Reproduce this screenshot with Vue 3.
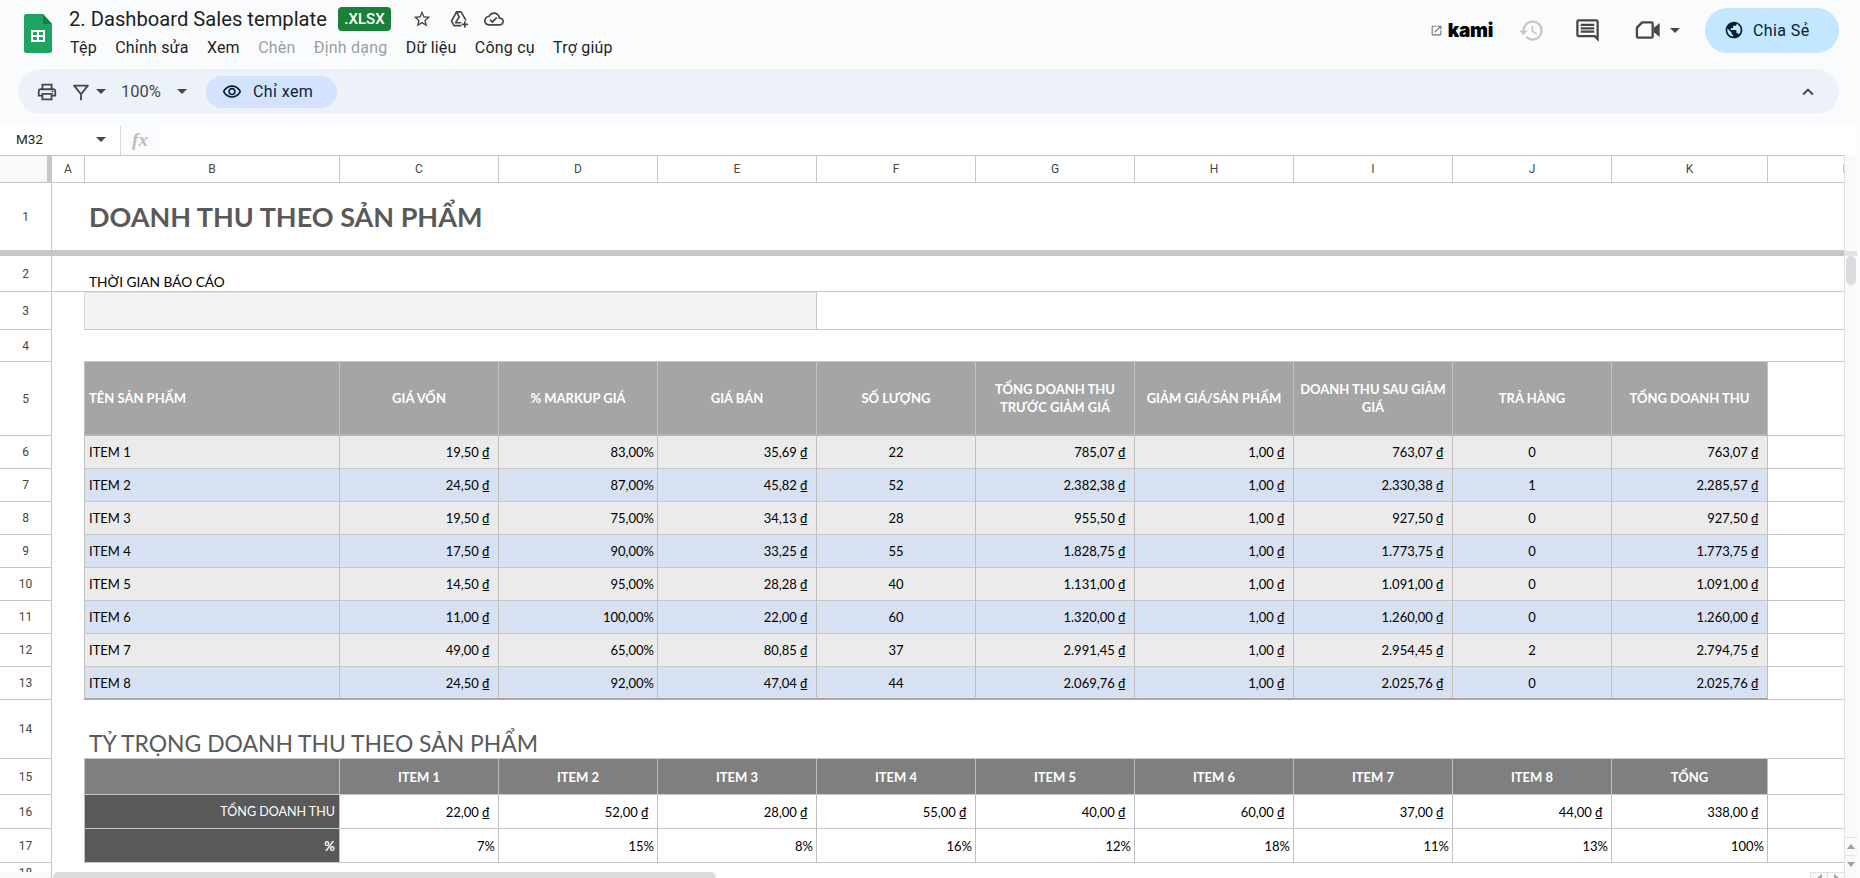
<script setup>
const menu = [
  { label: 'Tệp' },
  { label: 'Chỉnh sửa' },
  { label: 'Xem' },
  { label: 'Chèn', off: true },
  { label: 'Định dạng', off: true },
  { label: 'Dữ liệu' },
  { label: 'Công cụ' },
  { label: 'Trợ giúp' }
]

const letters = ['A', 'B', 'C', 'D', 'E', 'F', 'G', 'H', 'I', 'J', 'K', 'L']

const heads = [
  'TÊN SẢN PHẨM', 'GIÁ VỐN', '% MARKUP GIÁ', 'GIÁ BÁN', 'SỐ LƯỢNG',
  'TỔNG DOANH THU TRƯỚC GIẢM GIÁ', 'GIẢM GIÁ/SẢN PHẨM', 'DOANH THU SAU GIẢM GIÁ', 'TRẢ HÀNG', 'TỔNG DOANH THU'
]

const products = [
  ['ITEM 1', '19,50 ₫', '83,00%', '35,69 ₫', '22', '785,07 ₫', '1,00 ₫', '763,07 ₫', '0', '763,07 ₫'],
  ['ITEM 2', '24,50 ₫', '87,00%', '45,82 ₫', '52', '2.382,38 ₫', '1,00 ₫', '2.330,38 ₫', '1', '2.285,57 ₫'],
  ['ITEM 3', '19,50 ₫', '75,00%', '34,13 ₫', '28', '955,50 ₫', '1,00 ₫', '927,50 ₫', '0', '927,50 ₫'],
  ['ITEM 4', '17,50 ₫', '90,00%', '33,25 ₫', '55', '1.828,75 ₫', '1,00 ₫', '1.773,75 ₫', '0', '1.773,75 ₫'],
  ['ITEM 5', '14,50 ₫', '95,00%', '28,28 ₫', '40', '1.131,00 ₫', '1,00 ₫', '1.091,00 ₫', '0', '1.091,00 ₫'],
  ['ITEM 6', '11,00 ₫', '100,00%', '22,00 ₫', '60', '1.320,00 ₫', '1,00 ₫', '1.260,00 ₫', '0', '1.260,00 ₫'],
  ['ITEM 7', '49,00 ₫', '65,00%', '80,85 ₫', '37', '2.991,45 ₫', '1,00 ₫', '2.954,45 ₫', '2', '2.794,75 ₫'],
  ['ITEM 8', '24,50 ₫', '92,00%', '47,04 ₫', '44', '2.069,76 ₫', '1,00 ₫', '2.025,76 ₫', '0', '2.025,76 ₫']
]

const cellClass = (i) => {
  if (i === 0) return 'left first'
  if (i === 2) return 'pct'
  if (i === 4 || i === 8) return 'mid'
  return 'money'
}

const shareHeads = ['ITEM 1', 'ITEM 2', 'ITEM 3', 'ITEM 4', 'ITEM 5', 'ITEM 6', 'ITEM 7', 'ITEM 8', 'TỔNG']
const shareTotals = ['22,00 ₫', '52,00 ₫', '28,00 ₫', '55,00 ₫', '40,00 ₫', '60,00 ₫', '37,00 ₫', '44,00 ₫', '338,00 ₫']
const sharePct = ['7%', '15%', '8%', '16%', '12%', '18%', '11%', '13%', '100%']
</script>

<template>
  <div class="page">
    <header class="topbar">
      <svg class="logo" viewBox="0 0 28 39" width="28" height="39">
        <path fill="#1ea362" d="M2.5 0H19l9 10v26.5a2.5 2.5 0 0 1-2.5 2.5h-23A2.5 2.5 0 0 1 0 36.500V2.500A2.500 2.500 0 0 1 2.500 0z" />
        <path fill="#12804a" d="M19 0l9 10h-9z" />
        <path fill="#fff" d="M7 16h14v12H7zm2 2v3h4v-3zm6 0v3h4v-3zm-6 5v3h4v-3zm6 0v3h4v-3z" fill-rule="evenodd" />
      </svg>
      <div class="doc">
        <div class="doc-title">
          <span class="name">2. Dashboard Sales template</span>
          <span class="badge">.XLSX</span>
          <svg class="ico star" viewBox="0 0 24 24" width="20" height="20"><path d="M22 9.24l-7.190-.62L12 2 9.190 8.630 2 9.240l5.460 4.730L5.820 21 12 17.270 18.180 21l-1.630-7.030L22 9.240zM12 15.400l-3.760 2.270 1-4.280-3.320-2.880 4.380-.38L12 6.100l1.710 4.040 4.380.38-3.320 2.880 1 4.280L12 15.400z" /></svg>
          <svg class="ico drive" viewBox="0 0 24 24" width="20" height="20" fill="none" stroke="#444746" stroke-width="2" stroke-linejoin="round" stroke-linecap="round"><path d="M9 3.500h5.500L20 13M9 3.500L3 14.500 6 20h8M9 3.500l3.300 6L8 16.500h6" /><path d="M19 15.500v6M16 18.500h6" /></svg>
          <svg class="ico cloud" viewBox="0 0 24 24" width="20" height="20"><path d="M19.350 10.040C18.670 6.590 15.640 4 12 4 9.110 4 6.600 5.640 5.350 8.040 2.340 8.360 0 10.910 0 14c0 3.310 2.690 6 6 6h13c2.760 0 5-2.240 5-5 0-2.640-2.050-4.780-4.650-4.960zM19 18H6c-2.210 0-4-1.790-4-4 0-2.050 1.530-3.760 3.560-3.970l1.070-.11.5-.95C8.080 7.140 9.940 6 12 6c2.620 0 4.880 1.860 5.390 4.430l.3 1.500 1.530.11c1.560.1 2.780 1.410 2.780 2.960 0 1.650-1.350 3-3 3zm-9-3.820l-2.090-2.090L6.500 13.500 10 17l6.010-6.010-1.410-1.410z" /></svg>
        </div>
        <nav class="menu">
          <span v-for="m in menu" :key="m.label" :class="{ off: m.off }">{{ m.label }}</span>
        </nav>
      </div>
      <div class="actions">
        <svg class="open" viewBox="0 0 24 24" width="13" height="13"><path d="M19 19H5V5h7V3H5c-1.110 0-2 .9-2 2v14c0 1.100.89 2 2 2h14c1.100 0 2-.9 2-2v-7h-2v7zM14 3v2h3.590l-9.830 9.830 1.410 1.410L19 6.410V10h2V3h-7z" /></svg>
        <span class="kami">kami</span>
        <svg class="hist" viewBox="0 0 24 24" width="27" height="27"><path d="M13 3a9 9 0 0 0-9 9H1l3.890 3.890.07.14L9 12H6c0-3.870 3.130-7 7-7s7 3.130 7 7-3.130 7-7 7c-1.930 0-3.680-.79-4.940-2.060l-1.420 1.420A8.954 8.954 0 0 0 13 21a9 9 0 0 0 0-18zm-1 5v5l4.280 2.540.72-1.210-3.500-2.080V8H12z" /></svg>
        <svg class="ico comment" viewBox="0 0 24 24" width="27" height="27"><path d="M21.990 4c0-1.100-.89-2-1.990-2H4c-1.100 0-2 .9-2 2v12c0 1.100.9 2 2 2h14l4 4-.01-18zM20 4v13.170L18.830 16H4V4h16zM6 12h12v2H6zm0-3h12v2H6zm0-3h12v2H6z" /></svg>
        <svg class="video" viewBox="0 0 24 24" width="28" height="28"><path fill="none" stroke="#444746" stroke-width="2" stroke-linejoin="round" d="M7 5.500h8a1 1 0 0 1 1 1v11a1 1 0 0 1-1 1H3.500a1 1 0 0 1-1-1V10z" /><path fill="#444746" d="M17 10l5-4v12l-5-4z" /></svg>
        <svg class="caret" viewBox="0 0 10 5" width="10" height="5"><path d="M0 0h10L5 5z" /></svg>
        <button class="share">
          <svg viewBox="0 0 24 24" width="20" height="20"><path d="M12 2C6.480 2 2 6.480 2 12s4.480 10 10 10 10-4.480 10-10S17.520 2 12 2zM4 12c0-.61.08-1.210.21-1.780L8.990 15v1c0 1.100.9 2 2 2v1.930C7.060 19.430 4 16.070 4 12zm13.890 5.400c-.26-.81-1-1.400-1.900-1.400h-1v-3c0-.55-.45-1-1-1h-6v-2h2c.55 0 1-.45 1-1V7h2c1.100 0 2-.9 2-2v-.41C17.920 5.770 20 8.650 20 12c0 2.080-.81 3.980-2.110 5.400z" /></svg>
          <span>Chia Sẻ</span>
        </button>
      </div>
    </header>

    <div class="toolbar">
      <svg class="ico print" viewBox="0 0 24 24" width="22" height="22"><path d="M19 8h-1V3H6v5H5c-1.660 0-3 1.340-3 3v6h4v4h12v-4h4v-6c0-1.660-1.340-3-3-3zM8 5h8v3H8V5zm8 12v2H8v-4h8v2zm2-2v-2H6v2H4v-4c0-.55.45-1 1-1h14c.55 0 1 .45 1 1v4h-2z" /><circle cx="18" cy="11.500" r="1" /></svg>
      <svg class="filter" viewBox="0 0 24 24" width="22" height="22" fill="none" stroke="#444746" stroke-width="2" stroke-linejoin="round"><path d="M4.500 5h15L12 14.500zM12 14v7" /></svg>
      <svg class="caret c1" viewBox="0 0 10 5" width="10" height="5"><path d="M0 0h10L5 5z" /></svg>
      <span class="zoom">100%</span>
      <svg class="caret c2" viewBox="0 0 10 5" width="10" height="5"><path d="M0 0h10L5 5z" /></svg>
      <div class="viewonly">
        <svg viewBox="0 0 24 24" width="20" height="20"><path d="M12 6c3.790 0 7.170 2.130 8.820 5.500C19.170 14.870 15.790 17 12 17s-7.170-2.130-8.820-5.500C4.830 8.130 8.210 6 12 6m0-2C7 4 2.730 7.110 1 11.500 2.730 15.890 7 19 12 19s9.270-3.110 11-7.500C21.270 7.110 17 4 12 4zm0 5c1.380 0 2.500 1.120 2.500 2.500S13.380 14 12 14s-2.500-1.120-2.500-2.500S10.620 9 12 9m0-2c-2.480 0-4.500 2.020-4.500 4.500S9.520 16 12 16s4.500-2.020 4.500-4.500S14.480 7 12 7z" /></svg>
        <span>Chỉ xem</span>
      </div>
      <svg class="ico chevron" viewBox="0 0 24 24" width="22" height="22"><path d="M7.410 15.410L12 10.830l4.590 4.580L18 14l-6-6-6 6z" /></svg>
    </div>

    <div class="formula">
      <span class="cellref">M32</span>
      <svg class="caret" viewBox="0 0 10 5" width="10" height="5"><path d="M0 0h10L5 5z" /></svg>
      <span class="fx">fx</span>
      <div class="input"></div>
    </div>

    <div class="sheet">
      <div class="grid">
        <div class="row col-head">
          <div class="corner"></div>
          <div v-for="l in letters" :key="l" class="letter">{{ l }}</div>
        </div>

        <div class="row r1">
          <div class="rh">1</div>
          <div class="wide title">DOANH THU THEO SẢN PHẨM</div>
        </div>
        <div class="freeze"></div>
        <div class="row r2">
          <div class="rh">2</div>
          <div class="wide label">THỜI GIAN BÁO CÁO</div>
        </div>
        <div class="row r3">
          <div class="rh">3</div>
          <div class="a"></div>
          <div class="period"></div>
          <div class="rest-f"></div>
        </div>
        <div class="row r4">
          <div class="rh">4</div>
          <div class="a"></div>
          <div class="rest-b"></div>
        </div>
        <div class="row r5">
          <div class="rh">5</div>
          <div class="a"></div>
          <div v-for="(h, i) in heads" :key="h" class="c th" :class="{ 'left first': i === 0 }">{{ h }}</div>
          <div class="c l"></div>
        </div>
        <div v-for="(p, n) in products" :key="p[0]" class="row r6" :class="{ last: n === 7 }">
          <div class="rh">{{ n + 6 }}</div>
          <div class="a"></div>
          <div v-for="(v, i) in p" :key="i" class="c" :class="[cellClass(i), n % 2 ? 'blue' : 'grey']">{{ v }}</div>
          <div class="c l"></div>
        </div>
        <div class="row r14">
          <div class="rh">14</div>
          <div class="a"></div>
          <div class="sub">TỶ TRỌNG DOANH THU THEO SẢN PHẨM</div>
        </div>
        <div class="row r15">
          <div class="rh">15</div>
          <div class="a"></div>
          <div class="c th2 first"></div>
          <div v-for="h in shareHeads" :key="h" class="c th2">{{ h }}</div>
          <div class="c l"></div>
        </div>
        <div class="row r16">
          <div class="rh">16</div>
          <div class="a"></div>
          <div class="c dark first">TỔNG DOANH THU</div>
          <div v-for="(v, i) in shareTotals" :key="i" class="c money">{{ v }}</div>
          <div class="c l"></div>
        </div>
        <div class="row r17">
          <div class="rh">17</div>
          <div class="a"></div>
          <div class="c dark big first">%</div>
          <div v-for="(v, i) in sharePct" :key="i" class="c pct">{{ v }}</div>
          <div class="c l"></div>
        </div>
        <div class="row r18">
          <div class="rh">18</div>
        </div>

        <div class="hscroll">
          <div class="hcorner"></div>
          <div class="hthumb"></div>
          <div class="harrows">
            <span class="tri-l"></span>
            <span class="tri-r"></span>
          </div>
        </div>
      </div>

      <div class="vscroll">
        <div class="vfrozen"></div>
        <div class="vsplit"></div>
        <div class="vthumb"></div>
        <div class="varrows">
          <div class="varrow"><span class="tri-u"></span></div>
          <div class="varrow"><span class="tri-d"></span></div>
        </div>
      </div>
    </div>
  </div>
</template>

<style>
html, body {
  margin: 0;
  overflow: hidden;
  background: #f9fbfd;
}
</style>

<style scoped>
.page {
  width: 1860px;
  height: 878px;
  overflow: hidden;
  background: #f9fbfd;
  font-family: Roboto, "Noto Sans", sans-serif;
  color: #1f1f1f;
}

svg {
  display: block;
  flex: none;
}
.ico path, .ico circle { fill: #444746; }
.ico.drive path { fill: none; }
.caret path { fill: #444746; }

.topbar {
  height: 69px;
  display: flex;
  padding-left: 24px;
}
.logo {
  margin-top: 14px;
}
.doc {
  margin-left: 17px;
}
.doc-title {
  height: 38px;
  display: flex;
  align-items: center;
}
.name {
  font-size: 20.200px;
  color: #1f1f1f;
  width: 269px;
  white-space: nowrap;
}
.badge {
  width: 53px;
  height: 24px;
  background: #188038;
  border-radius: 4px;
  color: #fff;
  font-size: 15px;
  font-weight: 500;
  line-height: 24px;
  text-align: center;
}
.star { margin-left: 21px; }
.drive { margin-left: 17px; }
.cloud { margin-left: 15px; }

.menu {
  display: flex;
  gap: 18.300px;
  font-size: 16px;
  letter-spacing: 0.2px;
  line-height: 20px;
  color: #1f1f1f;
  padding-left: 1px;
}
.menu .off {
  color: #9aa0a6;
}

.actions {
  margin-left: auto;
  margin-right: 21px;
  height: 60px;
  display: flex;
  align-items: center;
}
.open path { fill: #757575; }
.kami {
  margin-left: 5px;
  font-family: Inter, sans-serif;
  font-weight: 900;
  font-size: 19px;
  letter-spacing: -0.3px;
  color: #000;
  line-height: 1;
}
.hist { margin-left: 25px; }
.hist path { fill: #c4c7c5; }
.comment { margin-left: 29px; }
.video { margin-left: 33px; }
.actions .caret { margin-left: 8px; }
.share {
  margin-left: 25px;
  width: 134px;
  height: 45px;
  border: 0;
  border-radius: 23px;
  background: #c2e7ff;
  display: flex;
  align-items: center;
  padding: 0 0 0 19px;
  font-family: inherit;
  font-size: 16px;
  letter-spacing: 0.4px;
  color: #001d35;
  cursor: pointer;
}
.share path { fill: #001d35; }
.share span { margin-left: 9px; }

.toolbar {
  margin: 0 21px 0 18px;
  height: 45px;
  background: #edf2fa;
  border-radius: 23px;
  display: flex;
  align-items: center;
}
.print { margin-left: 18px; }
.filter { margin-left: 12px; }
.toolbar .c1 { margin-left: 4px; }
.zoom {
  margin-left: 15px;
  width: 50px;
  font-size: 16.500px;
  color: #444746;
}
.toolbar .c2 { margin-left: 6px; }
.viewonly {
  margin-left: 19px;
  width: 131px;
  height: 32px;
  box-sizing: border-box;
  padding-left: 16px;
  background: #d3e3fd;
  border-radius: 16px;
  display: flex;
  align-items: center;
  font-size: 16px;
  letter-spacing: 0.4px;
  color: #0b1f3f;
}
.viewonly path { fill: #0b1f3f; }
.viewonly span { margin-left: 11px; }
.chevron { margin-left: auto; margin-right: 20px; }

.formula {
  margin-top: 12px;
  width: 1857px;
  height: 29px;
  background: #fff;
  display: flex;
  align-items: center;
}
.cellref {
  width: 96px;
  padding-left: 16px;
  padding-bottom: 3px;
  box-sizing: border-box;
  font-size: 13.500px;
  color: #1f1f1f;
}
.formula .caret { margin-right: 14px; margin-left: 0; margin-bottom: 2px; }
.fx {
  width: 39px;
  height: 29px;
  line-height: 27px;
  border-left: 1px solid #d5d7da;
  box-sizing: border-box;
  background: #f9fbfd;
  text-align: center;
  font-family: "Liberation Serif", serif;
  font-style: italic;
  font-weight: 700;
  font-size: 19px;
  color: #bdbdbd;
}
.input {
  flex: 1;
}

.sheet {
  width: 1857px;
  height: 723px;
  display: flex;
}
.grid {
  width: 1844px;
  height: 723px;
  overflow: hidden;
  background: #fff;
  position: relative;
  font-family: Lato, "Open Sans", sans-serif;
  color: #000;
}
.row {
  display: grid;
  grid-template-columns: 52px 32px 256px repeat(8, 159px) 156px 76px;
  box-sizing: border-box;
}
.row > div {
  box-sizing: border-box;
  min-width: 0;
}

.col-head {
  grid-template-columns: 52px 33px 255px repeat(8, 159px) 156px 76px;
  height: 28px;
  border-top: 1px solid #c7c7c7;
  border-bottom: 1px solid #c7c7c7;
  font-family: Roboto, sans-serif;
  font-size: 12px;
  color: #444746;
}
.corner {
  background: #f8f9fa;
  border-right: 5px solid #c7c7c7;
}
.letter {
  display: flex;
  align-items: center;
  justify-content: center;
  border-right: 1px solid #c7c7c7;
}
.letter:last-child {
  border-right: 0;
  width: 156px;
}

.rh {
  border-right: 1px solid #c7c7c7;
  border-bottom: 1px solid #c7c7c7;
  display: flex;
  align-items: center;
  justify-content: center;
  font-family: Roboto, sans-serif;
  font-size: 12px;
  color: #444746;
}
.a {
  border: 0;
}
.wide {
  grid-column: 2 / -1;
  border-bottom: 1px solid #c7c7c7;
  padding-left: 37px;
  white-space: nowrap;
}
.r1 { height: 68px; }
.title {
  display: flex;
  align-items: center;
  font-size: 27px;
  font-weight: 700;
  color: #595959;
}
.freeze {
  height: 5px;
  background: #c7c7c7;
}
.r2 { height: 36px; }
.label {
  display: flex;
  align-items: flex-end;
  font-size: 13.700px;
  padding-bottom: 1px;
}
.r3 { height: 38px; }
.period {
  grid-column: 3 / 7;
  background: #f3f3f3;
  border-bottom: 1px solid #c7c7c7;
  border-top: 1px solid #dedede;
  border-left: 1px solid #dedede;
  border-right: 1px solid #c7c7c7;
}
.rest-f {
  grid-column: 7 / -1;
  border-bottom: 1px solid #c7c7c7;
}
.r4 { height: 32px; }
.rest-b {
  grid-column: 3 / -1;
  border-bottom: 1px solid #c7c7c7;
}

.c {
  display: flex;
  align-items: center;
  justify-content: flex-end;
  font-size: 13px;
  white-space: nowrap;
  border-right: 1px solid #bfbfbf;
  border-bottom: 1px solid #c7c7c7;
}
.c.first {
  border-left: 1px solid #bfbfbf;
}
.c.l {
  border-right: 0;
}
.c.left {
  justify-content: flex-start;
  padding-left: 4px;
}
.c.money { padding-right: 8px; }
.c.pct { padding-right: 3px; }
.c.mid { justify-content: center; }

.r5 { height: 74px; }
.th {
  background: #a5a5a5;
  color: #fff;
  font-weight: 700;
  justify-content: center;
  text-align: center;
  white-space: normal;
  line-height: 18px;
  font-size: 13px;
  padding: 0 4px;
  border-bottom: 2px solid #b4b4b4;
  border-right-color: #c2c2c2;
}
.r6 { height: 33px; }
.grey { background: #ebebeb; }
.blue { background: #d8e1f2; }
.r6.last .c:not(.l) { border-bottom: 2px solid #a9a9a9; }

.r14 { height: 59px; }
.sub {
  grid-column: 3 / -1;
  border-bottom: 1px solid #c7c7c7;
  display: flex;
  align-items: flex-end;
  padding-left: 5px;
  font-size: 22.900px;
  font-weight: 400;
  color: #595959;
  line-height: 30px;
}
.r15 { height: 36px; }
.th2 {
  background: #7f7f7f;
  color: #fff;
  font-weight: 700;
  justify-content: center;
}
.r16 { height: 34px; }
.r17 { height: 34px; }
.dark {
  background: #595959;
  color: #fff;
  padding-right: 4px;
  font-size: 12.500px;
}
.big { font-weight: 700; font-size: 13px; }
.r18 { height: 20px; }

.hscroll {
  position: absolute;
  left: 0;
  right: 0;
  bottom: 0;
  height: 6px;
  display: flex;
  background: #fff;
}
.hcorner {
  width: 52px;
  background: #f8f9fa;
  border-right: 1px solid #c7c7c7;
  box-sizing: border-box;
}
.hthumb {
  width: 663px;
  margin-left: 1px;
  background: #dadce0;
  border-radius: 5px 5px 0 0;
}
.harrows {
  margin-left: auto;
  width: 34px;
  display: flex;
  border-top: 1px solid #e0e0e0;
  box-sizing: border-box;
  background: #f8f9fa;
}
.tri-l, .tri-r {
  flex: 1;
  position: relative;
}
.tri-l { border-right: 1px solid #e0e0e0; border-left: 1px solid #e0e0e0; }
.tri-l::after, .tri-r::after {
  content: "";
  position: absolute;
  left: 6px;
  top: 1px;
  border-style: solid;
  border-width: 4px 5px;
  border-color: transparent;
}
.tri-l::after { border-right-color: #9aa0a6; border-left-width: 0; }
.tri-r::after { border-left-color: #9aa0a6; border-right-width: 0; }

.vscroll {
  width: 13px;
  height: 723px;
  background: #f8f9fa;
  border-left: 1px solid #e3e3e3;
  box-sizing: border-box;
  position: relative;
}
.vfrozen {
  height: 96px;
}
.vsplit {
  height: 5px;
  background: #dfe3ea;
}
.vthumb {
  width: 10px;
  height: 29px;
  margin-left: 1px;
  background: #dadce0;
  border-radius: 5px;
}
.varrows {
  position: absolute;
  left: 0;
  right: 0;
  bottom: 5px;
}
.varrow {
  height: 18px;
  border-top: 1px solid #e3e3e3;
  box-sizing: border-box;
  display: flex;
  align-items: center;
  justify-content: center;
}
.tri-u, .tri-d {
  border-style: solid;
  border-width: 0 4px;
  border-color: transparent;
}
.tri-u { border-bottom: 5px solid #9aa0a6; }
.tri-d { border-top: 5px solid #9aa0a6; }
</style>
